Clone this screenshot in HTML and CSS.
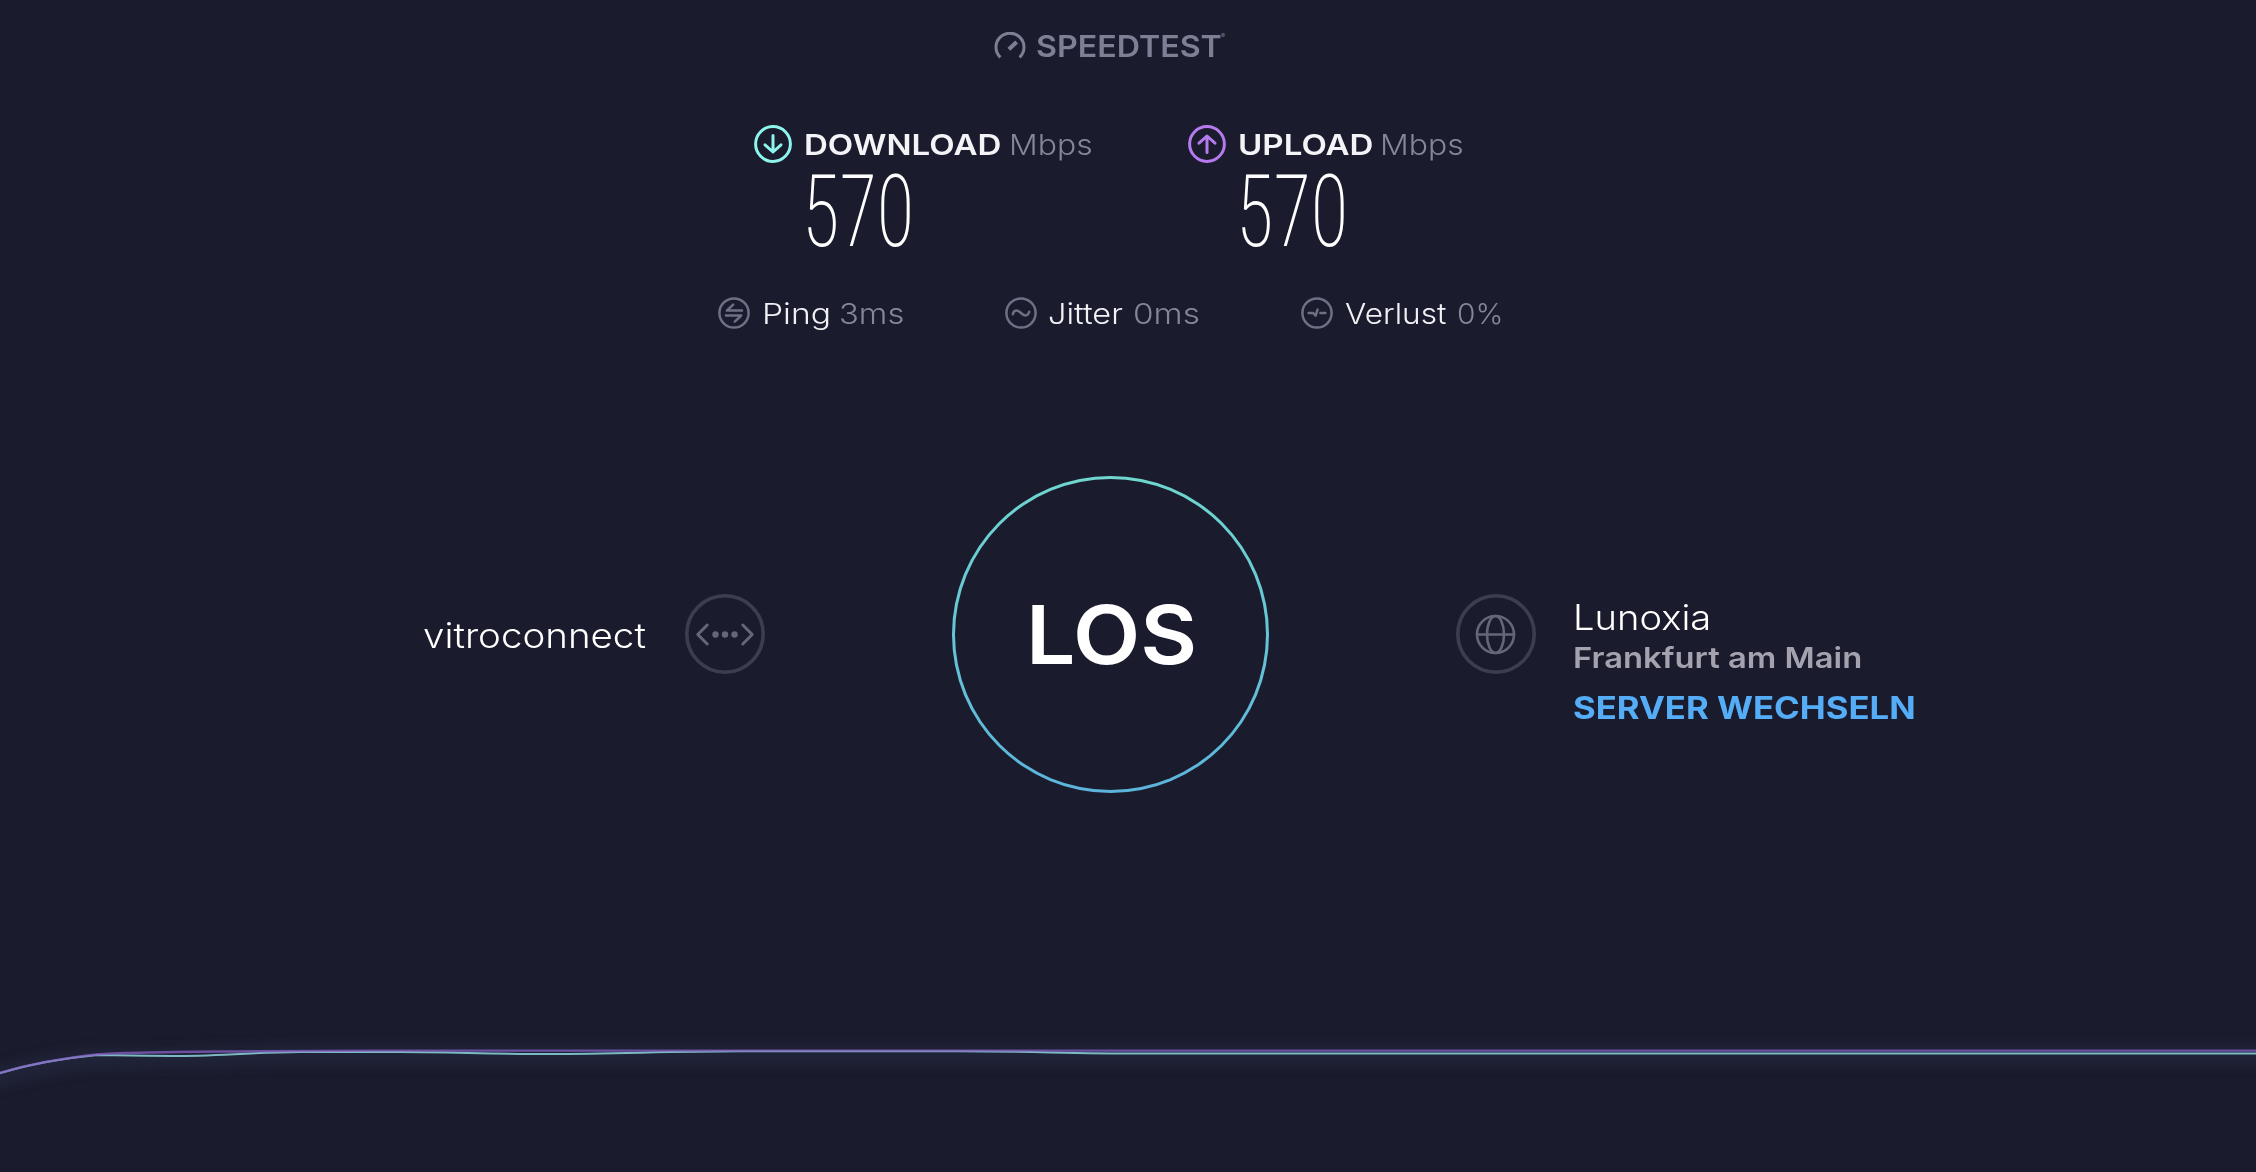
FILE: index.html
```html
<!DOCTYPE html>
<html lang="de">
<head>
    <meta charset="UTF-8">
    <meta name="viewport" content="width=device-width, initial-scale=1.0">
    <title>Speedtest</title>
    <link rel="stylesheet" href="styles.css">
</head>
<body>
    <main>
        <header class="logo">
            <svg class="logo-icon" viewBox="0 0 32 28">
                <path d="M6.4 25.4A14 14 0 1 1 25.6 25.4"/>
                <path class="needle" d="M14.9 17.2L22.6 10"/>
            </svg>
            <span class="text logo-text">SPEEDTEST</span>
            <span class="logo-mark">®</span>
        </header>

        <section class="results">
            <div class="result">
                <div class="result-title">
                    <svg class="result-icon download" viewBox="0 0 38 38">
                        <circle cx="19" cy="19" r="17.4"/>
                        <path d="M19 10.5V27M11 19.8L19 27L27 19.8"/>
                    </svg>
                    <span class="text name name-download">DOWNLOAD</span>
                    <span class="text unit">Mbps</span>
                </div>
                <div class="text result-value">570</div>
            </div>
            <div class="result">
                <div class="result-title">
                    <svg class="result-icon upload" viewBox="0 0 38 38">
                        <circle cx="19" cy="19" r="17.4"/>
                        <path d="M19 27.5V11M11 18.2L19 11L27 18.2"/>
                    </svg>
                    <span class="text name name-upload">UPLOAD</span>
                    <span class="text unit">Mbps</span>
                </div>
                <div class="text result-value">570</div>
            </div>
        </section>

        <section class="stats">
            <div class="stat ping">
                <svg class="stat-icon" viewBox="0 0 32 32">
                    <circle cx="16" cy="16" r="14.6"/>
                    <path d="M24 13.6H8.8L15.2 7.6M8 18.6H23.2L16.8 24.6"/>
                </svg>
                <span class="text stat-name">Ping</span>
                <span class="text stat-value">3ms</span>
            </div>
            <div class="stat jitter">
                <svg class="stat-icon" viewBox="0 0 32 32">
                    <circle cx="16" cy="16" r="14.6"/>
                    <path d="M7.8 17.2C9 12.6 12.6 12.6 16 16S23 19.4 24.2 14.8"/>
                </svg>
                <span class="text stat-name">Jitter</span>
                <span class="text stat-value">0ms</span>
            </div>
            <div class="stat loss">
                <svg class="stat-icon" viewBox="0 0 32 32">
                    <circle cx="16" cy="16" r="14.6"/>
                    <path d="M7.6 16H12.2L14.6 18.6L16.6 12.6M19.4 16H24.4"/>
                </svg>
                <span class="text stat-name">Verlust</span>
                <span class="text stat-value">0%</span>
            </div>
        </section>

        <section class="test">
            <div class="provider">
                <span class="text provider-name">vitroconnect</span>
                <svg class="round-icon" viewBox="0 0 80 80">
                    <circle class="round" cx="40" cy="40" r="38.2"/>
                    <path d="M22.2 31L12.8 40.5L22.2 50M57.8 31L67.2 40.5L57.8 50"/>
                    <g class="dots">
                        <circle cx="30.5" cy="40.5" r="3.2"/>
                        <circle cx="40" cy="40.5" r="3.2"/>
                        <circle cx="49.5" cy="40.5" r="3.2"/>
                    </g>
                </svg>
            </div>

            <button class="go"><span class="text">LOS</span></button>

            <div class="server">
                <svg class="round-icon" viewBox="0 0 80 80">
                    <circle class="round" cx="40" cy="40" r="38.2"/>
                    <g class="globe">
                        <circle cx="39.5" cy="40.5" r="18.5"/>
                        <ellipse cx="39.5" cy="40.5" rx="8.5" ry="18.5"/>
                        <path d="M21 40.5H58"/>
                    </g>
                </svg>
                <div class="server-info">
                    <div class="text server-name">Lunoxia</div>
                    <div class="text server-city">Frankfurt am Main</div>
                    <a class="text server-change">SERVER WECHSELN</a>
                </div>
            </div>
        </section>
    </main>

    <svg class="graph" viewBox="0 0 2256 100">
        <defs>
            <filter id="glow" filterUnits="userSpaceOnUse" x="-40" y="0" width="2336" height="130">
                <feGaussianBlur stdDeviation="8"/>
            </filter>
        </defs>
        <path class="glow" d="M-40 90L0 76C30 67 60 61 97 57C150 59 220 55 290 54H2300" filter="url(#glow)"/>
        <path class="line-down" d="M0 72C30 63 60 57.5 97 54C125 54.5 140 55 173 55C215 55 250 51.5 300 51H400C450 51 490 53 550 53C620 53 660 50.5 740 50.3H960C1030 50.3 1070 52.5 1140 52.5H2256"/>
        <path class="line-up" d="M0 72C30 63 60 57.5 97 53.5C125 51 180 51 260 50.2C400 49.3 500 49.3 700 49.6H2256"/>
    </svg>
</body>
</html>
```

FILE: styles.css
```css
* {
    box-sizing: border-box;
}
body {
    margin: 0;
    height: 1172px;
    overflow: hidden;
    background: #1a1b2c;
    color: #fff;
    font-family: Inter, sans-serif;
}
main {
    width: 2220px;
    padding-top: 26px;
}
svg {
    display: block;
    flex: none;
    fill: none;
    stroke-linecap: round;
    stroke-linejoin: round;
}
/* wide letterforms */
.text {
    display: block;
    flex: none;
    white-space: nowrap;
    transform: scaleX(var(--wide, 1.1));
    transform-origin: 0 50%;
}

/* logo */
.logo {
    display: flex;
    justify-content: center;
    height: 40px;
    line-height: 41px;
    color: #7d8095;
}
.logo-icon {
    width: 32px;
    height: 28px;
    margin: 6px 10px 0 0;
    stroke: #7d8095;
    stroke-width: 3;
    stroke-linecap: butt;
}
.logo-icon .needle {
    stroke-width: 4;
}
.logo-text {
    --wide: 1.073;
    width: 185px;
    font-size: 30px;
    font-weight: 600;
}
.logo-mark {
    width: 5px;
    font-size: 6px;
    line-height: 20px;
}

/* download / upload */
.results {
    display: flex;
    justify-content: center;
    gap: 96px;
    margin-top: 59px;
    padding-right: 3px;
}
.result-title {
    display: flex;
    height: 38px;
    line-height: 40px;
    font-size: 29px;
}
.result-icon {
    width: 38px;
    height: 38px;
    margin-right: 12px;
    stroke-width: 3;
}
.download {
    stroke: #8ef5ee;
}
.upload {
    stroke: #b57bee;
}
.name {
    --wide: 1.14;
    font-weight: 600;
    color: #f4f4f8;
}
.name-download {
    width: 205px;
}
.name-upload {
    width: 142px;
}
.unit {
    width: 83px;
    font-weight: 300;
    color: #85869a;
}
.result-value {
    --wide: 0.765;
    width: 110px;
    height: 80px;
    margin: 9px 0 0 48px;
    font-family: "Roboto Condensed", Roboto, sans-serif;
    font-size: 101px;
    font-weight: 200;
    line-height: 80px;
}

/* ping / jitter / loss */
.stats {
    display: flex;
    justify-content: center;
    gap: 102px;
    margin-top: 45px;
    padding-right: 2px;
}
.stat {
    display: flex;
    height: 32px;
    line-height: 33px;
    font-size: 29px;
}
.stat-icon {
    width: 32px;
    height: 32px;
    margin-right: 12px;
    stroke: #6f7085;
    stroke-width: 2.5;
}
.stat-name {
    color: #f0f0f5;
    font-weight: 350;
}
.stat-value {
    color: #85869a;
    font-weight: 300;
}
.ping .stat-name {
    --wide: 1.16;
    width: 77px;
}
.ping .stat-value {
    --wide: 1.13;
    width: 64px;
}
.jitter .stat-icon {
    margin-right: 11px;
}
.jitter .stat-name {
    --wide: 1.12;
    width: 85px;
}
.jitter .stat-value {
    --wide: 1.15;
    width: 66px;
}
.loss .stat-name {
    --wide: 1.09;
    width: 112px;
}
.loss .stat-value {
    --wide: 1.03;
    width: 43px;
}

/* provider, start button, server */
.test {
    display: grid;
    grid-template-columns: 1fr 317px 1fr;
    margin-top: 147px;
}
.provider {
    display: flex;
    justify-content: flex-end;
    padding: 118px 187px 0 0;
}
.provider-name {
    width: 262px;
    font-size: 35px;
    font-weight: 300;
    line-height: 82px;
}
.round-icon {
    width: 80px;
    height: 80px;
    stroke: #65667a;
    stroke-width: 3;
}
.round {
    stroke: #3d3d50;
    stroke-width: 3.6;
}
.dots {
    fill: #65667a;
    stroke: none;
}
.globe {
    stroke-width: 2.6;
}
.go {
    display: flex;
    align-items: center;
    height: 317px;
    padding: 1px 0 0 71px;
    border: 3px solid transparent;
    border-radius: 50%;
    background: linear-gradient(#1a1b2c, #1a1b2c) padding-box, linear-gradient(#70d6cf, #5cb4dc) border-box;
    color: #fff;
    font-family: inherit;
    font-size: 81px;
    font-weight: 600;
}
.go .text {
    --wide: 1.08;
}
.server {
    display: flex;
    padding: 118px 0 0 187px;
}
.server-info {
    padding-left: 37px;
}
.server-name {
    --wide: 1.09;
    font-size: 35px;
    font-weight: 300;
    line-height: 46px;
}
.server-city {
    --wide: 1.13;
    color: #a3a2ae;
    font-size: 29px;
    font-weight: 600;
    line-height: 36px;
}
.server-change {
    --wide: 1.12;
    margin-top: 12px;
    color: #55adf8;
    font-size: 31px;
    font-weight: 700;
    line-height: 40px;
}

/* speed graph */
.graph {
    width: 2256px;
    height: 100px;
    margin-top: 208px;
    overflow: visible;
}
.line-down {
    stroke: #7db9c2;
    stroke-width: 2;
}
.line-up {
    stroke: #8560c4;
    stroke-width: 2.4;
    opacity: 0.75;
}
.glow {
    stroke: #35466a;
    stroke-width: 12;
    opacity: 0.35;
}
```
